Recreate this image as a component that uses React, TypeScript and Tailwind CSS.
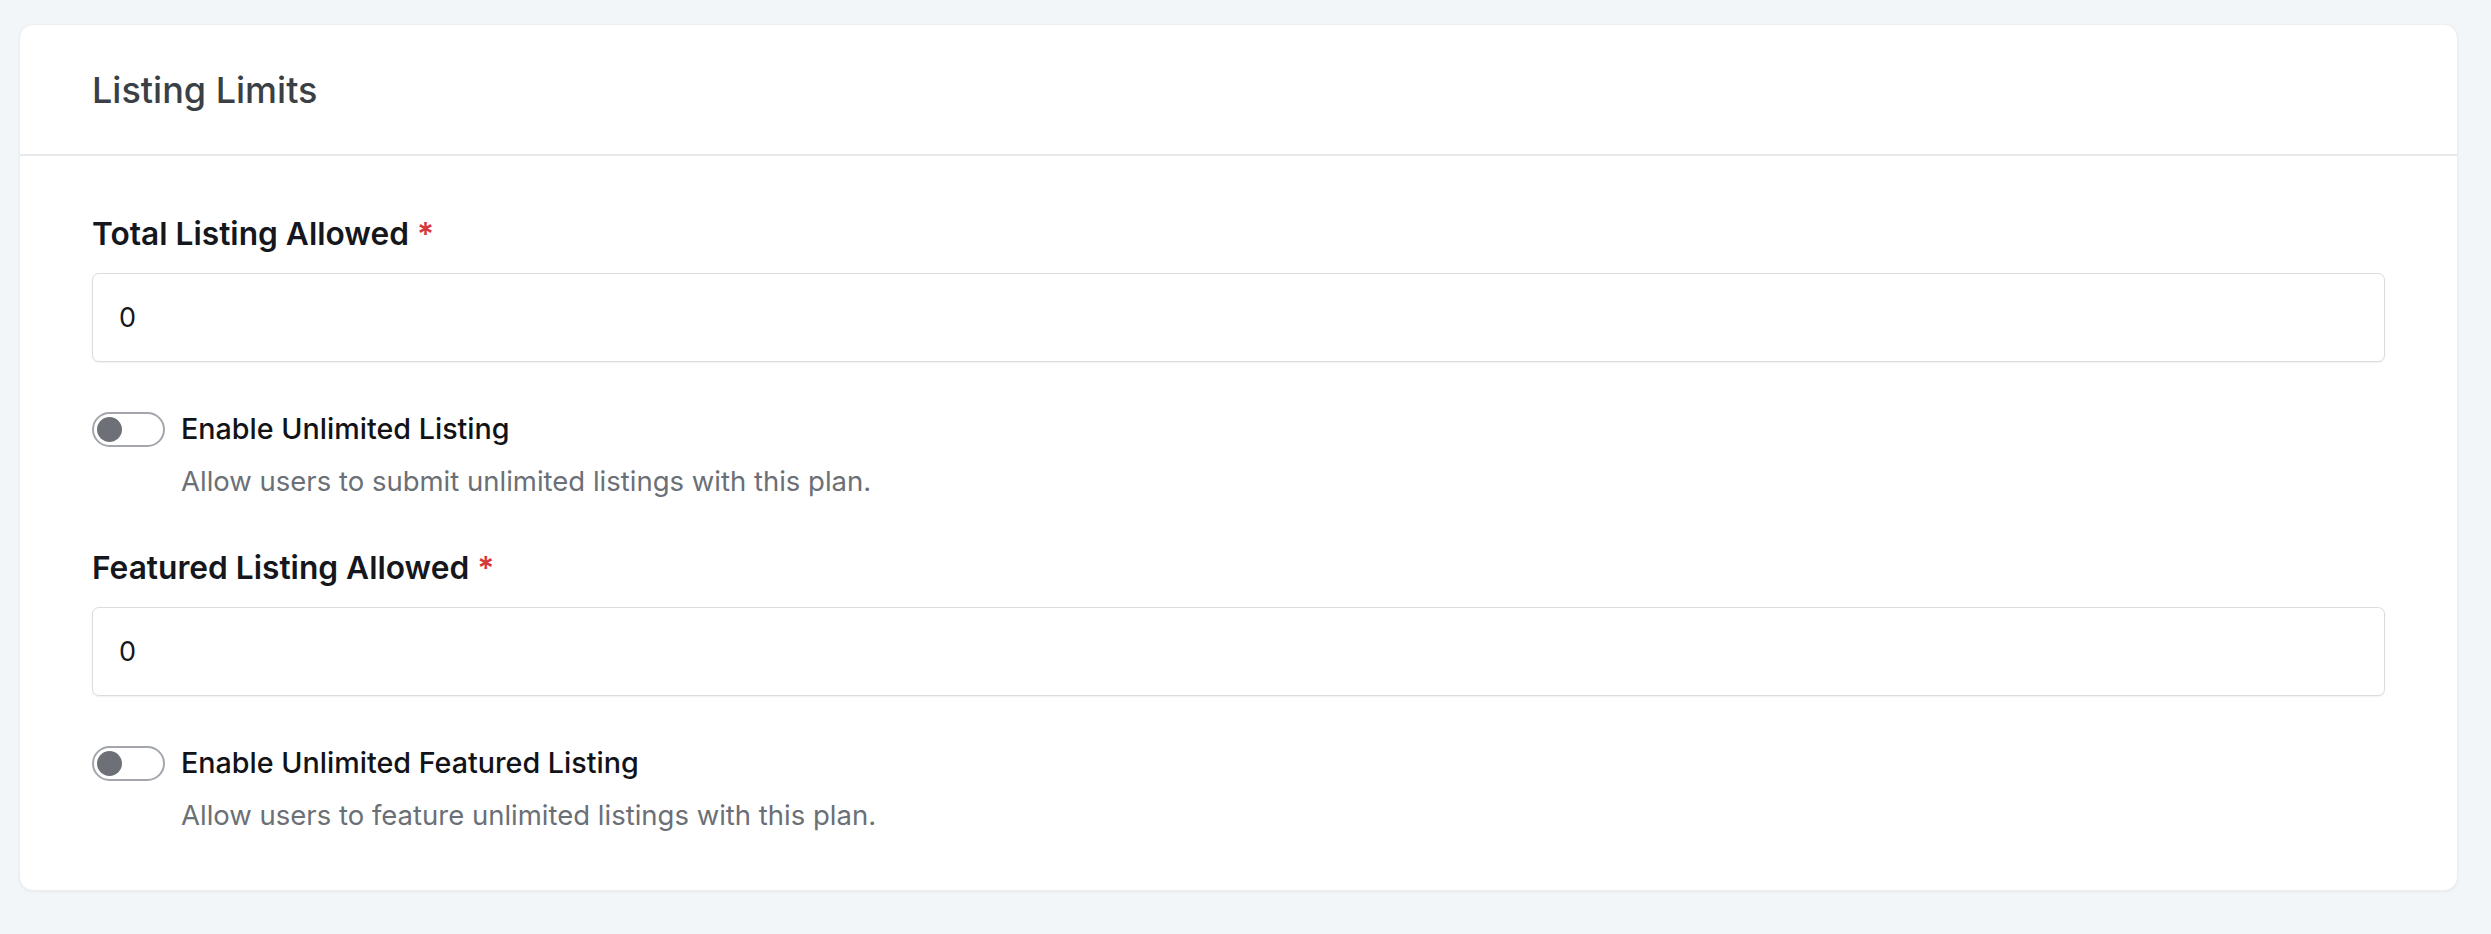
import { useState } from 'react';

interface LimitFieldProps {
  label: string;
  value: string;
  toggleLabel: string;
  help: string;
  className?: string;
}

function LimitField({ label, value, toggleLabel, help, className }: LimitFieldProps) {
  const [val, setVal] = useState(value);
  const [on, setOn] = useState(false);

  return (
    <div className={className}>
      <label className="block text-[31.7px] leading-[36px] font-semibold text-[#15171c]">
        {label} <span className="text-[#d6393b]">*</span>
      </label>
      <input
        value={val}
        onChange={(e) => setVal(e.target.value)}
        className="mt-[21px] block w-full h-[89px] rounded-[7px] border border-[#d9dce1] bg-white px-[26px] text-[27px] text-[#15171c] shadow-[0_1px_2px_rgba(0,0,0,0.06)] outline-none"
      />
      <div className="mt-[49px] flex items-center gap-[16px]">
        <button
          type="button"
          onClick={() => setOn(!on)}
          className={`flex h-[35px] w-[73px] items-center rounded-full border-2 px-[3px] ${on ? 'border-[#2563eb] bg-[#2563eb] justify-end' : 'border-[#a3a7ad] bg-white justify-start'}`}
        >
          <span className={`h-[25px] w-[25px] rounded-full ${on ? 'bg-white' : 'bg-[#6d7076]'}`} />
        </button>
        <span className="text-[28.7px] leading-[36px] font-medium text-[#111317]">{toggleLabel}</span>
      </div>
      <p className="mt-[16px] pl-[89px] text-[27.5px] leading-[36px] text-[#6b6f76]">{help}</p>
    </div>
  );
}

export default function App() {
  return (
    <div className="min-h-screen bg-[#f3f6f9] pl-[19px] pr-[33px] pt-[24px] font-['Inter',sans-serif]">
      <div className="rounded-[14px] border border-[#eceef1] bg-white shadow-[0_1px_3px_rgba(0,0,0,0.05)]">
        {/* Header */}
        <div className="flex h-[131px] items-center border-b-2 border-[#e7e9ec] px-[72px]">
          <h2 className="text-[36px] font-medium text-[#3b3f46]">Listing Limits</h2>
        </div>

        {/* Fields */}
        <div className="px-[72px] pt-[60px] pb-[57px]">
          <LimitField
            label="Total Listing Allowed"
            value="0"
            toggleLabel="Enable Unlimited Listing"
            help="Allow users to submit unlimited listings with this plan."
          />
          <LimitField
            className="mt-[51px]"
            label="Featured Listing Allowed"
            value="0"
            toggleLabel="Enable Unlimited Featured Listing"
            help="Allow users to feature unlimited listings with this plan."
          />
        </div>
      </div>
    </div>
  );
}
